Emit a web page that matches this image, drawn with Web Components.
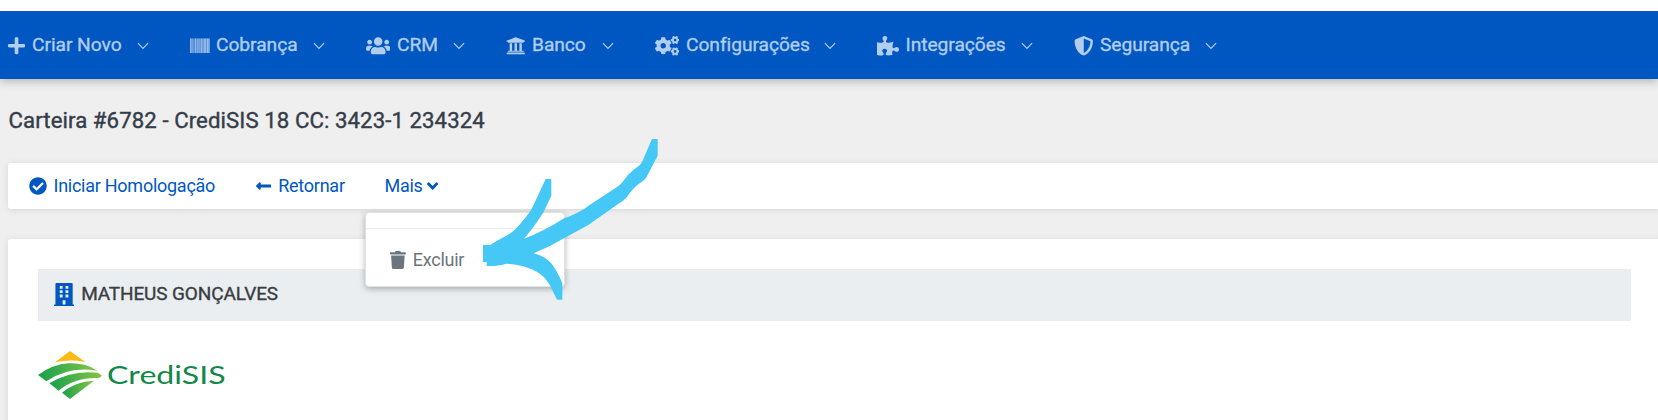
<!DOCTYPE html>
<html lang="pt-BR">
<head>
<meta charset="utf-8">
<title>Carteira #6782</title>
<style>
html,body{margin:0;height:420px;overflow:hidden;background:#efefef;font-family:Roboto,"Liberation Sans",sans-serif}
</style>
</head>
<body>
<app-page></app-page>
<script>
const cog='M512.1 191l-8.2 14.3c-3 5.3-9.4 7.5-15.1 5.4-11.8-4.4-22.6-10.7-32.1-18.6-4.6-3.8-5.8-10.5-2.8-15.7l8.2-14.3c-6.9-8-12.3-17.3-15.9-27.4h-16.5c-6 0-11.2-4.3-12.2-10.3-2-12-2.1-24.6 0-37.1 1-6 6.2-10.4 12.2-10.4h16.5c3.6-10.1 9-19.4 15.9-27.4l-8.2-14.3c-3-5.2-1.9-11.9 2.8-15.7 9.5-7.9 20.4-14.2 32.1-18.6 5.7-2.1 12.1.1 15.1 5.4l8.2 14.3c10.5-1.9 21.2-1.9 31.7 0L552 6.3c3-5.3 9.4-7.5 15.1-5.4 11.8 4.4 22.6 10.7 32.1 18.6 4.6 3.8 5.8 10.5 2.8 15.7l-8.2 14.3c6.9 8 12.3 17.3 15.9 27.4h16.5c6 0 11.2 4.3 12.2 10.3 2 12 2.1 24.6 0 37.1-1 6-6.2 10.4-12.2 10.4h-16.5c-3.6 10.1-9 19.4-15.9 27.4l8.2 14.3c3 5.2 1.9 11.9-2.8 15.7-9.5 7.9-20.4 14.2-32.1 18.6-5.7 2.1-12.1-.1-15.1-5.4l-8.2-14.3c-10.4 1.9-21.2 1.9-31.7 0zm-10.5-58.8c38.5 29.6 82.4-14.3 52.8-52.8-38.5-29.7-82.4 14.3-52.8 52.8z';
const P=d=>`<path d="${d}"/>`;
const ICONS={
plus:[448,P('M416 208H272V64c0-17.67-14.33-32-32-32h-32c-17.67 0-32 14.33-32 32v144H32c-17.67 0-32 14.33-32 32v32c0 17.67 14.33 32 32 32h144v144c0 17.67 14.33 32 32 32h32c17.67 0 32-14.33 32-32V304h144c17.67 0 32-14.33 32-32v-32c0-17.67-14.33-32-32-32z')],
barcode:[512,'<path opacity=".4" d="M0 64h512v384H0z"/>'+P('M0 448V64h18v384H0zm26.857-.273V64H36v383.727h-9.143zm27.143 0V64h8.857v383.727H54zm44.857 0V64h8.857v383.727h-8.857zm36 0V64h17.714v383.727h-17.714zm44.857 0V64h8.857v383.727h-8.857zm18 0V64h8.857v383.727h-8.857zm18 0V64h8.857v383.727h-8.857zm35.715 0V64h18v383.727h-18zm44.857 0V64h18v383.727h-18zm35.999 0V64h18.001v383.727h-18.001zm36.001 0V64h18.001v383.727h-18.001zm26.857 0V64h18v383.727h-18zm45.143 0V64h26.857v383.727h-26.857zm35.714 0V64h9.143v383.727H476zm18 .273V64h18v384h-18z')],
users:[640,P('M96 224c35.3 0 64-28.7 64-64s-28.7-64-64-64-64 28.7-64 64 28.7 64 64 64zm448 0c35.3 0 64-28.7 64-64s-28.7-64-64-64-64 28.7-64 64 28.7 64 64 64zm32 32h-64c-17.6 0-33.5 7.1-45.1 18.6 40.3 22.1 68.9 62 75.1 109.4h66c17.7 0 32-14.3 32-32v-32c0-35.3-28.7-64-64-64zm-256 0c61.9 0 112-50.1 112-112S381.9 32 320 32 208 82.1 208 144s50.1 112 112 112zm76.8 32h-8.3c-20.8 10-43.9 16-68.5 16s-47.6-6-68.5-16h-8.3C179.6 288 128 339.6 128 403.2V432c0 26.5 21.5 48 48 48h288c26.5 0 48-21.5 48-48v-28.8c0-63.6-51.6-115.2-115.2-115.2zm-223.7-13.4C161.5 263.1 145.6 256 128 256H64c-35.3 0-64 28.7-64 64v32c0 17.7 14.3 32 32 32h65.9c6.3-47.4 34.9-87.3 75.2-109.4z')],
bank:[512,P('M496 128v16a8 8 0 0 1-8 8h-24v12c0 6.627-5.373 12-12 12H60c-6.627 0-12-5.373-12-12v-12H24a8 8 0 0 1-8-8v-16a8 8 0 0 1 4.941-7.392l232-88a7.996 7.996 0 0 1 6.118 0l232 88A8 8 0 0 1 496 128zm-24 304H40c-13.255 0-24 10.745-24 24v16a8 8 0 0 0 8 8h464a8 8 0 0 0 8-8v-16c0-13.255-10.745-24-24-24zM96 192v192H60c-6.627 0-12 5.373-12 12v20h416v-20c0-6.627-5.373-12-12-12h-36V192h-64v192h-64V192h-64v192h-64V192H96z')],
cogs:[640,P(cog)+`<path transform="translate(0 298.9)" d="${cog}"/>`+P('M386.3 286.1l33.7 16.8c10.1 5.8 14.5 18.1 10.5 29.1-8.9 24.2-26.4 46.4-42.6 65.8-7.4 8.9-20.2 11.1-30.3 5.3l-29.1-16.8c-16 13.7-34.6 24.6-54.9 31.7v33.6c0 11.6-8.3 21.6-19.7 23.6-24.6 4.2-50.4 4.4-75.9 0-11.5-2-20-11.9-20-23.6V418c-20.3-7.2-38.9-18-54.9-31.7L74 403c-10 5.8-22.9 3.6-30.3-5.3-16.2-19.4-33.3-41.6-42.2-65.7-4-10.9.4-23.2 10.5-29.1l33.3-16.8c-3.9-20.9-3.9-42.4 0-63.4L12 205.8c-10.1-5.8-14.6-18.1-10.5-29 8.9-24.2 26-46.4 42.2-65.8 7.4-8.9 20.2-11.1 30.3-5.3l29.1 16.8c16-13.7 34.6-24.6 54.9-31.7V57.1c0-11.5 8.2-21.5 19.6-23.5 24.6-4.2 50.5-4.4 76-.1 11.5 2 20 11.9 20 23.6v33.6c20.3 7.2 38.9 18 54.9 31.7l29.1-16.8c10-5.8 22.9-3.6 30.3 5.3 16.2 19.4 33.2 41.6 42.1 65.8 4 10.9.1 23.2-10 29.1l-33.7 16.8c3.9 21 3.9 42.5 0 63.5zm-117.6 21.1c59.2-77-28.7-164.9-105.7-105.7-59.2 77 28.7 164.9 105.7 105.7z')],
puzzle:[576,P('M519.442 288.651c-41.519 0-59.5 31.593-82.058 31.593C377.409 320.244 432 144 432 144s-196.288 80-196.288-3.297c0-35.827 36.288-46.25 36.288-85.985C272 19.216 243.885 0 210.539 0c-34.654 0-66.366 18.891-66.366 56.346 0 41.364 31.711 59.277 31.711 81.75C175.885 207.719 0 166.758 0 166.758v333.237s178.635 41.047 178.635-28.662c0-22.473-40-40.107-40-81.471 0-37.456 29.25-56.346 63.577-56.346 33.673 0 61.788 19.216 61.788 54.717 0 39.735-36.288 50.158-36.288 85.985 0 60.803 129.675 25.73 181.23 25.73 0 0-34.725-120.101 25.827-120.101 35.962 0 46.423 36.152 86.308 36.152C556.712 416 576 387.99 576 354.443c0-34.199-18.962-65.792-56.558-65.792z')],
shield:[512,P('M466.5 83.7l-192-80a48.15 48.15 0 0 0-36.9 0l-192 80C27.7 91.1 16 108.6 16 128c0 198.5 114.5 335.7 221.5 380.3 11.8 4.9 25.1 4.9 36.9 0C360.1 472.6 496 349.3 496 128c0-19.4-11.7-36.9-29.5-44.3zM256.1 446.3l-.1-381 175.9 73.3c-3.3 151.4-82.1 261.1-175.8 307.7z')],
check:[512,P('M504 256c0 136.967-111.033 248-248 248S8 392.967 8 256 119.033 8 256 8s248 111.033 248 248zM227.314 387.314l184-184c6.248-6.248 6.248-16.379 0-22.627l-22.627-22.627c-6.248-6.249-16.379-6.249-22.628 0L216 308.118l-70.059-70.059c-6.248-6.248-16.379-6.248-22.628 0l-22.627 22.627c-6.248 6.248-6.248 16.379 0 22.627l104 104c6.249 6.249 16.379 6.249 22.628.001z')],
back:[448,P('M134.059 296H436c6.627 0 12-5.373 12-12v-56c0-6.627-5.373-12-12-12H134.059v-46.059c0-21.382-25.851-32.09-40.971-16.971L7.029 239.029c-9.373 9.373-9.373 24.569 0 33.941l86.059 86.059c15.119 15.119 40.971 4.411 40.971-16.971V296z')],
angle:[320,P('M143 352.3L7 216.3c-9.4-9.4-9.4-24.6 0-33.9l22.6-22.6c9.4-9.4 24.6-9.4 33.9 0l96.4 96.4 96.4-96.4c9.4-9.4 24.6-9.4 33.9 0l22.6 22.6c9.4 9.4 9.4 24.6 0 33.9l-136 136c-9.2 9.4-24.4 9.4-33.8 0z')],
trash:[448,P('M432 32H312l-9.4-18.7A24 24 0 0 0 281.1 0H166.8a23.72 23.72 0 0 0-21.4 13.3L136 32H16A16 16 0 0 0 0 48v32a16 16 0 0 0 16 16h416a16 16 0 0 0 16-16V48a16 16 0 0 0-16-16zM53.2 467a48 48 0 0 0 47.9 45h245.8a48 48 0 0 0 47.9-45L416 128H32z')],
building:[448,'<path fill-rule="evenodd" d="M436 480h-20V24c0-13.255-10.745-24-24-24H56C42.745 0 32 10.745 32 24v456H12c-6.627 0-12 5.373-12 12v20h448v-20c0-6.627-5.373-12-12-12zM128 64h64v64h-64zM256 64h64v64h-64zM128 160h64v64h-64zM256 160h64v64h-64zM128 256h64v64h-64zM256 256h64v64h-64zM192 384h64v96h-64z"/>']
};
class FaIcon extends HTMLElement{
  connectedCallback(){
    const [w,body]=ICONS[this.getAttribute('name')],s=+this.getAttribute('size')||19.5;
    this.attachShadow({mode:'open'}).innerHTML=`<style>:host{display:block;flex:none;line-height:0}svg{display:block;fill:currentColor}</style><svg width="${w/512*s}" height="${s}" viewBox="0 0 ${w} 512">${body}</svg>`;
  }
}
customElements.define('fa-icon',FaIcon);

class NavItem extends HTMLElement{
  connectedCallback(){
    const g=n=>this.getAttribute(n);
    this.attachShadow({mode:'open'}).innerHTML=`<style>
:host{display:grid;grid-template-columns:${g('iw')}px ${g('tw')}px 12px;align-items:center;width:${g('w')}px;flex:none;height:68px;color:#b2cdee}
.t{font-size:19.2px;font-weight:400;letter-spacing:-.04px;-webkit-text-stroke:.35px currentColor;line-height:24px;white-space:nowrap;margin-top:-1px}
.c{display:block;margin-top:2px}fa-icon{margin-top:2px}
</style><fa-icon name="${g('icon')}"></fa-icon><span class="t"><slot></slot></span><svg class="c" width="12" height="8" viewBox="0 0 12 8"><path d="M.9 1.2 6 6.3l5.100-5.100" fill="none" stroke="currentColor" stroke-width="1.200"/></svg>`;
  }
}
customElements.define('nav-item',NavItem);

class NavBar extends HTMLElement{
  constructor(){super();this.attachShadow({mode:'open'}).innerHTML=`<style>
:host{display:flex;height:68px;padding-left:8px;background:#0057c2;box-shadow:0 2px 9px rgba(0,0,0,.27);position:relative;z-index:1}
</style><slot></slot>`}
}
customElements.define('nav-bar',NavBar);

class ActionLink extends HTMLElement{
  constructor(){super();this.attachShadow({mode:'open'}).innerHTML=`<style>
:host{display:flex;align-items:center;flex:none;font-size:18px;letter-spacing:-.26px;line-height:24px;color:#0057c2;white-space:nowrap}
</style><slot></slot>`}
}
customElements.define('action-link',ActionLink);

class UiCard extends HTMLElement{
  constructor(){super();this.attachShadow({mode:'open'}).innerHTML=`<style>
:host{display:block;box-sizing:border-box;background:#fff;border-radius:3px;box-shadow:0 1px 7px rgba(0,0,0,.1)}
</style><slot></slot>`}
}
customElements.define('ui-card',UiCard);

class DropMenu extends HTMLElement{
  constructor(){super();this.attachShadow({mode:'open'}).innerHTML=`<style>
:host{display:block;position:absolute;left:365px;top:212px;width:200px;height:75px;box-sizing:border-box;background:#fff;border:1px solid #dfe2e4;border-radius:4px;box-shadow:0 2px 6px rgba(0,0,0,.28);z-index:2}
hr{margin:15px 0 0;border:0;border-top:1px solid #e9ecef}
.i{display:flex;align-items:center;padding:19px 0 0 24px;color:#6c757d;font-size:18px;letter-spacing:-.25px;line-height:24px}
.i span{margin-left:7px}
</style><hr><div class="i"><fa-icon name="trash" size="18"></fa-icon><span><slot></slot></span></div>`}
}
customElements.define('drop-menu',DropMenu);

class BrandLogo extends HTMLElement{
  constructor(){super();this.attachShadow({mode:'open'}).innerHTML=`<style>:host{display:block}svg{display:block}</style>
<svg width="190" height="50" viewBox="0 0 570 150"><defs><linearGradient id="g"><stop offset="0" stop-color="#16a04c"/><stop offset=".55" stop-color="#55b548"/><stop offset="1" stop-color="#85c540"/></linearGradient></defs>
<path fill="#fdb913" d="M96 0 142 33Q96 24 51 34Z"/>
<g fill="url(#g)"><path d="M0 72Q44 40 92 37Q145 36 178 59Q92 45 25 91Z"/><path d="M34 97Q100 56 180 65L192 74L183 81Q110 78 62 119Z"/><path d="M72 125Q112 91 168 89L96 144Z"/></g>
<text x="207" y="98" font-family="Lato,sans-serif" font-size="76" font-weight="400" fill="#128848" textLength="356" lengthAdjust="spacingAndGlyphs">CrediSIS</text></svg>`}
}
customElements.define('brand-logo',BrandLogo);

class HandArrow extends HTMLElement{
  constructor(){super();this.attachShadow({mode:'open'}).innerHTML=`<style>:host{display:block;position:absolute;left:350px;top:130px;z-index:3}svg{display:block}</style>
<svg width="320" height="180" viewBox="0 0 960 540"><path fill="#45c8f6" d="M906 27H923V77L888 144Q881 153 866 162Q851 172 829 203Q819 214 800 225L715 285L650 320Q600 350 551 370Q582 377 603 399Q620 419 637 460V509H621L600 466Q580 434 560 425Q520 404 470 401Q445 409 410 408V396H399V345H420Q448 328 468 318Q496 303 520 270Q541 248 552 222L587 147H604V197L581 246Q550 294 522 326Q580 304 640 266Q688 250 722 223L800 172Q814 164 833 136Q847 121 869 106Q878 96 884 78Z"/></svg>`}
}
customElements.define('hand-arrow',HandArrow);

class AppPage extends HTMLElement{
  constructor(){super();this.attachShadow({mode:'open'}).innerHTML=`<style>
:host{display:block;position:relative;width:1658px;height:420px;overflow:hidden;background:#efefef;border-top:11px solid #fff;box-sizing:border-box}
.layer{position:absolute;left:0;top:-11px}
h1{margin:27px 0 0 8.5px;font-size:22.2px;line-height:28px;font-weight:400;letter-spacing:.08px;-webkit-text-stroke:.4px currentColor;color:#343d49;white-space:nowrap}
.tools{display:flex;align-items:center;margin:29px -3px 0 8px;height:46px;padding-left:20.5px}
.main{margin:30px -3px 0 8px;height:200px;padding:30px}
.head{display:flex;align-items:center;height:52px;padding-left:16px;background:#eaeef1;color:#0057c2;font-size:19px;font-weight:400;letter-spacing:-.13px;-webkit-text-stroke:.35px currentColor}
.head fa-icon{margin-top:-1px}
.head span{margin:-4px 0 0 7px;color:#383d42}
brand-logo{margin-top:30px}
</style>
<nav-bar>
<nav-item icon="plus" iw="24" tw="105" w="182">Criar Novo</nav-item>
<nav-item icon="barcode" iw="26" tw="97" w="176">Cobrança</nav-item>
<nav-item icon="users" iw="31" tw="56" w="140">CRM</nav-item>
<nav-item icon="bank" iw="26" tw="70" w="149">Banco</nav-item>
<nav-item icon="cogs" iw="31" tw="138" w="222">Configurações</nav-item>
<nav-item icon="puzzle" iw="28.5" tw="115.5" w="197">Integrações</nav-item>
<nav-item icon="shield" iw="26" tw="105" w="160">Segurança</nav-item>
</nav-bar>
<h1>Carteira #6782 - CrediSIS 18 CC: 3423-1 234324</h1>
<ui-card class="tools">
<action-link style="width:227px"><fa-icon name="check" size="18"></fa-icon><span style="margin-left:7px">Iniciar Homologação</span></action-link>
<action-link style="width:129px"><fa-icon name="back" size="18"></fa-icon><span style="margin-left:7px">Retornar</span></action-link>
<action-link><span style="margin-right:4px">Mais</span><fa-icon name="angle" size="18"></fa-icon></action-link>
</ui-card>
<ui-card class="main">
<div class="head"><fa-icon name="building" size="23"></fa-icon><span>MATHEUS GONÇALVES</span></div>
<brand-logo></brand-logo>
</ui-card>
<div class="layer"><drop-menu>Excluir</drop-menu><hand-arrow></hand-arrow></div>`}
}
customElements.define('app-page',AppPage);
</script>
</body>
</html>
